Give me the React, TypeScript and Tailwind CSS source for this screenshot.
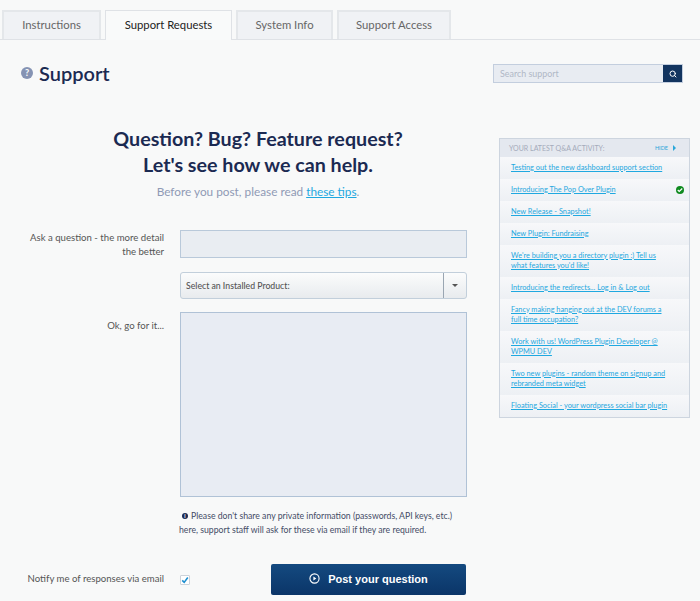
import React from 'react';
import { Search } from 'lucide-react';

const tabs = [
  { label: 'Instructions', width: 'w-[99px]', active: false },
  { label: 'Support Requests', width: 'w-[127px]', active: true },
  { label: 'System Info', width: 'w-[97px]', active: false },
  { label: 'Support Access', width: 'w-[114px]', active: false },
];

const activity = [
  { lines: 'Testing out the new dashboard support section' },
  { lines: 'Introducing The Pop Over Plugin', done: true },
  { lines: 'New Release - Snapshot!' },
  { lines: 'New Plugin: Fundraising' },
  { lines: "We're building you a directory plugin :) Tell us what features you'd like!" },
  { lines: 'Introducing the redirects... Log in & Log out' },
  { lines: 'Fancy making hanging out at the DEV forums a full time occupation?' },
  { lines: 'Work with us! WordPress Plugin Developer @ WPMU DEV' },
  { lines: 'Two new plugins - random theme on signup and rebranded meta widget' },
  { lines: 'Floating Social - your wordpress social bar plugin' },
];

const App = () => {
  return (
    <div className="w-[700px] h-[601px] overflow-hidden bg-[#f8f9f9] font-['Lato',sans-serif]">
      {/* Tabs */}
      <div className="flex items-end gap-[4px] h-[40px] pl-[2px] border-b border-[#dfe2e6]">
        {tabs.map(tab => (
          <div
            key={tab.label}
            className={
              tab.active
                ? `${tab.width} h-[30px] -mb-px flex items-center justify-center bg-[#f9fafa] border border-b-0 border-[#dfe2e6] text-[11.3px] text-[#222] pb-[1px]`
                : `${tab.width} h-[29px] flex items-center justify-center bg-[#f0f2f5] border-2 border-b-0 border-[#e4e7ea] text-[11.3px] text-[#666]`
            }
          >
            {tab.label}
          </div>
        ))}
      </div>

      {/* Title and search */}
      <div className="flex items-center justify-between h-[43px] mt-[12px] pl-[21px] pr-[17px]">
        <div className="flex items-center gap-[6px] pb-[2px]">
          <span className="w-[12px] h-[12px] rounded-full bg-[#8593b3] flex items-center justify-center text-[9px] font-black leading-none text-[#f8f9fa]">?</span>
          <h1 className="text-[20px] font-semibold leading-none text-[#1b2a52]">Support</h1>
        </div>
        <div className="flex w-[190px] h-[19px] border border-[#c3cede]">
          <div className="flex-1 flex items-center pl-[6px] pt-[1px] bg-[#e8ecf2] text-[8.9px] text-[#b0b8c6]">Search support</div>
          <div className="w-[19px] flex items-center justify-center bg-[#12345f]">
            <Search className="w-[8px] h-[8px] text-white" strokeWidth={3} />
          </div>
        </div>
      </div>

      <div className="flex">
        {/* Form */}
        <div className="w-[499px] shrink-0">
          <div className="w-[516px] pt-[31px] text-center">
            <h2 className="text-[19.7px] font-bold leading-[26px] text-[#1b2a52]">
              Question? Bug? Feature request?<br />Let's see how we can help.
            </h2>
            <p className="mt-[4px] text-[11.8px] leading-[20px] text-[#8f9ab5]">
              Before you post, please read <a className="text-[#1fa8e0] underline">these tips</a>.
            </p>
          </div>

          <div className="flex mt-[28px]">
            <label className="w-[164px] pl-[24px] text-right text-[9.6px] leading-[14px] text-[#555] pt-[1px]">
              Ask a question - the more detail the better
            </label>
            <div className="ml-[16px] w-[287px] h-[28px] bg-[#e9edf2] border border-[#b9c9da]" />
          </div>

          <div className="flex mt-[13px] ml-[180px] w-[287px] h-[27px] rounded-[3px] border border-[#c2cfdb] bg-gradient-to-b from-[#fbfcfc] to-[#e8ebee]">
            <div className="flex-1 flex items-center pl-[5px] text-[8.7px] font-medium text-[#555]">Select an Installed Product:</div>
            <div className="w-[23px] flex items-center justify-center border-l border-[#9aa6b2]">
              <span className="w-0 h-0 border-l-[3px] border-r-[3px] border-t-[3px] border-l-transparent border-r-transparent border-t-[#555]" />
            </div>
          </div>

          <div className="flex mt-[13px]">
            <label className="w-[164px] text-right text-[9.6px] leading-[14px] text-[#555] pt-[7px]">Ok, go for it...</label>
            <div className="ml-[16px] w-[287px] h-[185px] bg-[#e8ecf3] border border-[#b0c2d6]" />
          </div>

          <p className="ml-[179px] mt-[12px] w-[277px] text-[8.7px] leading-[14px] text-[#444c66]">
            <span className="inline-flex items-center justify-center w-[6px] h-[6px] ml-[3px] mr-[3px] rounded-full bg-[#1b2a52] text-[5px] font-black text-white align-[1px]">i</span>
            Please don't share any private information (passwords, API keys, etc.) here, support staff will ask for these via email if they are required.
          </p>

          <div className="flex items-center mt-[27px]">
            <span className="w-[164px] text-right text-[9.6px] text-[#555]">Notify me of responses via email</span>
            <span className="ml-[16px] w-[10px] h-[10px] flex items-center justify-center bg-white border border-[#cdd3da] rounded-[1px]">
              <svg viewBox="0 0 10 10" className="w-[8px] h-[8px]" fill="none" stroke="#1d8fd0" strokeWidth={2}>
                <path d="M1.5 5.5 L4 8 L8.5 2" />
              </svg>
            </span>
            <button className="ml-[81px] w-[195px] h-[31px] flex items-center justify-center gap-[8px] rounded-[2px] bg-gradient-to-b from-[#144a80] to-[#0b3568] text-white text-[11px] font-bold font-['Liberation_Sans',sans-serif]">
              <svg viewBox="0 0 12 12" className="w-[11px] h-[11px] -mt-[2px]" fill="none" stroke="#fff" strokeWidth={1.2}>
                <circle cx="6" cy="6" r="5" />
                <path d="M4.8 3.8 L8 6 L4.8 8.2 Z" fill="#fff" stroke="none" />
              </svg>
              Post your question
            </button>
          </div>
        </div>

        {/* Latest activity */}
        <div className="w-[191px] h-[280px] mt-[43px] border border-[#cdd5df] bg-[#f5f7f9]">
          <div className="flex items-center justify-between h-[18px] pl-[9px] pr-[13px] bg-[#e4e8ef] text-[7px] text-[#a4abbb]">
            <span>YOUR LATEST Q&amp;A ACTIVITY:</span>
            <span className="flex items-center gap-[5px] text-[5.5px] text-[#2aa7da]">
              HIDE
              <span className="w-0 h-0 border-t-[3px] border-b-[3px] border-l-[3px] border-t-transparent border-b-transparent border-l-[#2aa7da]" />
            </span>
          </div>
          {activity.map(item => (
            <div
              key={item.lines}
              className="relative px-[11px] pt-[5px] pb-[6px] bg-gradient-to-b from-[#f7f8fa] to-[#edf0f4] text-[7.35px] leading-[10px] text-[#1fa8e0] underline"
            >
              <span className="block w-[160px] py-[0.5px]">{item.lines}</span>
              {item.done && (
                <span className="absolute right-[5px] top-[7px] w-[8px] h-[8px] rounded-full bg-[#0f8a1f] flex items-center justify-center">
                  <svg viewBox="0 0 8 8" className="w-[6px] h-[6px]" fill="none" stroke="#fff" strokeWidth={1.6}>
                    <path d="M1 4 L3 6 L7 2" />
                  </svg>
                </span>
              )}
            </div>
          ))}
        </div>
      </div>
    </div>
  );
};

export default App;
